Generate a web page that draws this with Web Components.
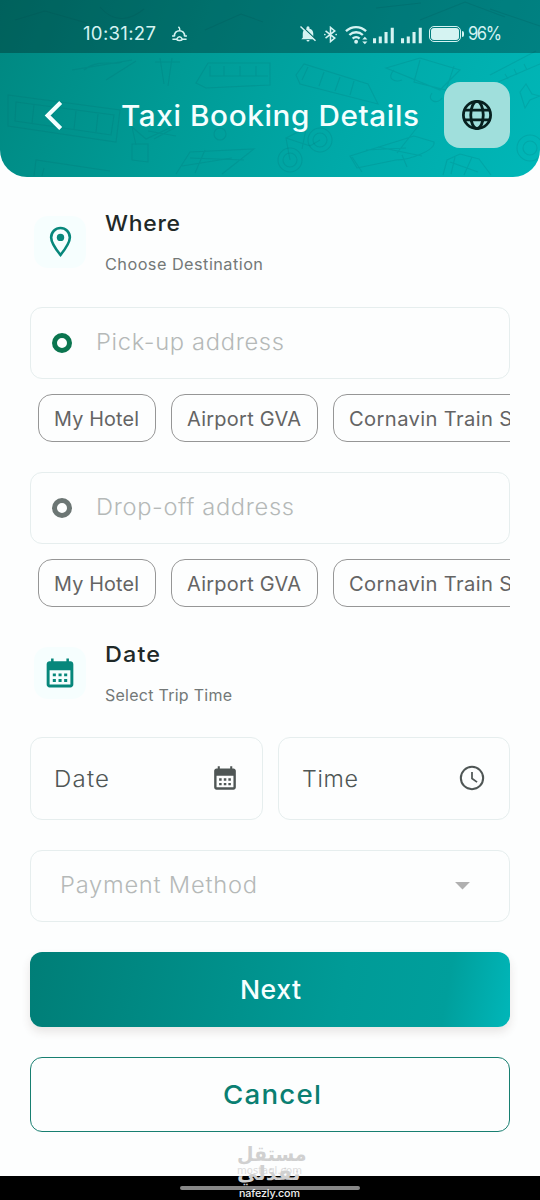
<!DOCTYPE html>
<html lang="en">
<head>
<meta charset="utf-8">
<title>Taxi Booking Details</title>
<style>
  body {
    margin: 0;
    width: 540px;
    height: 1200px;
    overflow: hidden;
    background: #fdfefe;
    font-family: Inter, "Liberation Sans", sans-serif;
  }
</style>
</head>
<body>
<booking-page></booking-page>

<script>
const ICONS = {
  bellOff: '<path fill="currentColor" d="M5 17V11C5 8 7 5.6 10 5V3.6a2 2 0 0 1 4 0V5c3 .6 5 3 5 6v6l2 2H3zM10 20h4a2 2 0 0 1-4 0z"/><path d="M3 1l20 19" stroke="#006a68" stroke-width="2"/><path d="M2 2l20 19" stroke="currentColor" stroke-width="2"/>',
  bluetooth: '<path fill="none" stroke="currentColor" stroke-width="2.2" d="M5 7l13 10-6 5V2l6 5L5 17"/><circle cx="4" cy="12" r="1.2" fill="currentColor"/><circle cx="20" cy="12" r="1.2" fill="currentColor"/>',
  wifi: '<g fill="none" stroke="currentColor" stroke-width="2.4"><path d="M1 8.500C7 2.800 16 2.800 22 8.500"/><path d="M4.600 12.500c4-3.800 10-3.800 14 0"/><path d="M8 16.300c2-2 5.200-2 7.200 0"/></g><circle cx="11.600" cy="19.600" r="2" fill="currentColor"/><path fill="currentColor" d="M18 17.300l2.700-3 2.700 3zM18 19.300l2.700 3 2.700-3z"/>',
  signal: '<path fill="currentColor" d="M0 16h3.200v5H0zM6 14h3.200v7H6zM12 9.500h3.200V21H12zM18.500 5h3.200v16h-3.200z"/>',
  food: '<g fill="none" stroke="currentColor" stroke-width="2.200"><path d="M5 16C3.500 5.500 20.500 5.500 19 16"/><path d="M1.500 15.500h3.500M19 15.500h3.500M2 20h6c2.500-4.500 5.500-4.500 8 0h6M8 20.500c1.500 2 6.500 2 8 0M12.500 7.500c.5-2-.5-3.500-2-5"/></g>',
  back: '<path fill="none" stroke="currentColor" stroke-width="3" d="M16.500 2.500L7 12l9.500 9.500"/>',
  globe: '<g fill="none" stroke="currentColor" stroke-width="2.100"><circle cx="12" cy="12" r="10.200"/><ellipse cx="12" cy="12" rx="4.700" ry="10.200"/><path d="M2.500 8.300h19M2.500 15.700h19"/></g>',
  pin: '<path fill="none" stroke="currentColor" stroke-width="1.900" d="M12 21.800C8.300 17.200 5.200 13 5.200 9a6.800 6.800 0 0 1 13.600 0c0 4-3.100 8.200-6.800 12.800z"/><circle cx="12" cy="9" r="2.700" fill="currentColor"/>',
  calendar: '<path fill="currentColor" fill-rule="evenodd" d="M5.300 1.200h1.900v2h9.600v-2h1.900v2h1.100c1.200 0 2.200 1 2.200 2.200v15.200c0 1.200-1 2.200-2.200 2.200H4.200C3 22.800 2 21.800 2 20.600V5.400c0-1.200 1-2.200 2.200-2.200h1.100zM4.200 10v10.600h15.600V10z"/><path fill="currentColor" d="M6.600 12.300h2.300v2.200H6.600zM10.900 12.300h2.300v2.200h-2.300zM15.100 12.300h2.300v2.200h-2.300zM6.600 16.500h2.300v2.200H6.600zM10.900 16.500h2.300v2.200h-2.300zM15.100 16.500h2.300v2.200h-2.300z"/>',
  clock: '<g fill="none" stroke="currentColor" stroke-width="1.900"><circle cx="12" cy="12" r="10.300"/><path stroke-width="1.600" d="M12 6.500v6l4.700 3.300"/></g>',
  caret: '<path fill="currentColor" d="M1.500 7h21L12 17.500z"/>'
};

class AppIcon extends HTMLElement {
  connectedCallback() {
    const shadow = this.attachShadow({mode: 'open'});
    const size = this.getAttribute('size') || 24;
    shadow.innerHTML = '<style>' +
      ':host { display: block; flex: none; }' +
      'svg { display: block; }' +
      '</style>' +
      `<svg width="${size}" height="${size}" viewBox="0 0 24 24">${ICONS[this.getAttribute('name')]}</svg>`;
  }
}

// One line of text that fills the given width: half by wider glyphs, half by tracking
class FitText extends HTMLElement {
  connectedCallback() {
    const shadow = this.attachShadow({mode: 'open'});
    shadow.innerHTML = '<style>' +
      ':host { display: block; flex: none; white-space: nowrap; }' +
      'span { display: inline-block; transform-origin: 0 50%; }' +
      '</style><span><slot></slot></span>';

    const target = parseFloat(this.getAttribute('width'));
    const span = shadow.querySelector('span');
    const natural = span.getBoundingClientRect().width;
    const scale = Math.sqrt(target / natural);
    const gap = (target / scale - natural) / (this.textContent.length - 1);
    span.style.letterSpacing = gap.toFixed(3) + 'px';
    span.style.transform = `scaleX(${scale.toFixed(4)})`;
    this.style.width = target + 'px';
  }
}

class StatusBar extends HTMLElement {
  constructor() {
    super();
    this.attachShadow({mode: 'open'}).innerHTML = `
      <style>
        :host {
          display: flex;
          align-items: center;
          box-sizing: border-box;
          height: 53px;
          padding: 15px 38px 0 83px;
          background: rgba(0, 0, 0, .28);
          color: #d5f3f2;
          font-size: 18px;
          line-height: 24px;
        }
        .food { margin: 0 auto 2px 15px; }
        .bt { margin-left: 5px; }
        .wifi { margin-left: 6px; }
        .sig { margin-left: 5px; }
        .sig + .sig { margin-left: 5px; }
        .battery {
          box-sizing: border-box;
          width: 32px;
          height: 16px;
          margin-left: 5px;
          padding: 1px;
          border: 1.500px solid;
          border-radius: 5px;
        }
        .battery i { display: block; height: 100%; border-radius: 3px; background: currentColor; }
        .cap { width: 2px; height: 6px; margin: 0 4px 0 1px; background: currentColor; border-radius: 0 2px 2px 0; }
      </style>
      <fit-text width="73">10:31:27</fit-text>
      <app-icon class="food" name="food" size="17"></app-icon>
      <app-icon name="bellOff" size="18"></app-icon>
      <app-icon class="bt" name="bluetooth" size="17"></app-icon>
      <app-icon class="wifi" name="wifi" size="23"></app-icon>
      <app-icon class="sig" name="signal" size="23"></app-icon>
      <app-icon class="sig" name="signal" size="23"></app-icon>
      <div class="battery"><i></i></div><div class="cap"></div>
      <fit-text width="34">96%</fit-text>`;
  }
}

class AppHeader extends HTMLElement {
  connectedCallback() {
    this.attachShadow({mode: 'open'}).innerHTML = `
      <style>
        :host {
          display: block;
          position: relative;
          height: 176.500px;
          overflow: hidden;
          border-radius: 0 0 27px 27px;
          background: linear-gradient(112deg, #008780 0%, #009b96 35%, #00a9a8 65%, #00b7b8 100%);
        }
        .art { position: absolute; inset: 0; }
        .content { position: relative; }
        .bar {
          display: flex;
          align-items: center;
          height: 124px;
          padding: 0 30px 0 38px;
          color: #f4ffff;
        }
        .title {
          margin-left: 50px;
          font-size: 28.500px;
          font-weight: 500;
        }
        .lang {
          display: grid;
          place-items: center;
          width: 66px;
          height: 66px;
          margin-left: auto;
          border-radius: 16px;
          background: #a0dfdc;
          color: #07201f;
        }
      </style>
      <svg class="art" width="540" height="177" fill="none" stroke="#005f62" stroke-opacity=".15" stroke-width="1.100">
        <path d="M8 95l112 15-4 32-108-16zM16 102l98 13-3 20-96-14zM34 105l-2 18M54 108l-2 18M76 111l-2 18M98 114l-2 18"/>
        <path d="M72 70l60-10M106 80l30-19M84 70c15-12 30-4 38-8M155 62h25M160 58l4 26M172 58l-4 28"/>
        <path d="M196 83l12-20h62v22l-64 3zM210 66v10h58M224 66v10M240 66v10M256 66v10"/>
        <path d="M132 160v-16h16v18zM136 145l-4-18 14 12 30-14M154 139l22-12M148 131l28 5"/><circle cx="220" cy="134" r="6"/>
        <path d="M34 176l2-16 74 11M42 176l2-8M176 174l14-22 64-3-32 25M182 166l50-8M190 158l54 2M205 150l-10 23"/>
        <circle cx="290" cy="160" r="12"/><circle cx="290" cy="160" r="7"/><circle cx="320" cy="140" r="12"/><circle cx="320" cy="140" r="7"/>
        <path d="M290 160l-4-22 24 8 10-6M286 138l20-10M302 149l5-25"/>
        <path d="M296 75l8-11 64 20 10 20-78-20zM308 67l-6 13M324 72l-5 14M340 77l-5 14M354 81l-4 14"/>
        <path d="M386 68l54 22 20-20-40-12zM420 60l-6 22 32 8 8-24M394 70c-8 8 0 13 8 10M432 93c-6 8 6 12 10 5"/>
        <path d="M350 156l64-20 20 6c2 8-24 18-38 18l-39 8zM352 157l10 15M378 147l44 9M397 153l22-28M402 155l5 12M366 150l40-2"/>
        <path d="M443 175l4-15 13-6 19 5 12 16M450 162l28 10M455 157l-4 17M472 157l-8 18"/>
        <path d="M490 75l46-24M498 82l42-18M505 74l3 5M514 69l3 6M524 64l3 6M520 92l6-8 6 10 8 2-10 4-5 8z"/><circle cx="530" cy="148" r="7"/><circle cx="530" cy="148" r="13"/>
        <path d="M15 20l30-9 42 12M100 7c15 18 32 12 44 2M205 30l36-16 22 8M376 8l45-5M420 20l45-18 40 15M490 9l50 17"/>
      </svg>
      <div class="content">
        <status-bar></status-bar>
        <div class="bar">
          <app-icon name="back" size="33"></app-icon>
          <fit-text class="title" width="298">${this.getAttribute('label')}</fit-text>
          <div class="lang"><app-icon name="globe" size="32"></app-icon></div>
        </div>
      </div>`;
  }
}

class SectionHead extends HTMLElement {
  constructor() {
    super();
    this.attachShadow({mode: 'open'}).innerHTML = `
      <style>
        :host { display: flex; height: 66px; padding-left: 4px; align-items: center; }
        .tile {
          display: grid;
          place-items: center;
          width: 52px;
          height: 52px;
          margin-right: 19px;
          border-radius: 14px;
          background: #f6fefe;
          color: #07877b;
        }
        .text { display: flex; flex-direction: column; gap: 17px; }
        .name { font-size: 22px; font-weight: 500; line-height: 30px; color: #1f2928; }
        .hint { font-size: 15.500px; line-height: 20px; color: #737877; }
      </style>
      <div class="tile"><slot name="icon"></slot></div>
      <div class="text">
        <div class="name"><slot></slot></div>
        <div class="hint"><slot name="hint"></slot></div>
      </div>`;
  }
}

class FormField extends HTMLElement {
  constructor() {
    super();
    this.attachShadow({mode: 'open'}).innerHTML = `
      <style>
        :host {
          display: flex;
          align-items: center;
          box-sizing: border-box;
          height: 72px;
          padding: 0 22px;
          border: 1.500px solid #e6eeee;
          border-radius: 12px;
          background: #fdfefe;
          font-size: 22.500px;
          font-weight: 300;
          color: #b5b9b8;
        }
        ::slotted(app-icon) { margin-left: auto; }
      </style>
      <slot></slot>`;
  }
}

class RadioDot extends HTMLElement {
  constructor() {
    super();
    this.attachShadow({mode: 'open'}).innerHTML =
      '<style>:host { display: block; box-sizing: border-box; flex: none; width: 20px; height: 20px; margin: 0 24px 0 -1px; border: 5px solid; border-radius: 50%; }</style>';
  }
}

class ChipRow extends HTMLElement {
  constructor() {
    super();
    this.attachShadow({mode: 'open'}).innerHTML = `
      <style>
        :host { display: flex; gap: 15px; padding-left: 7.500px; overflow: hidden; }
        div {
          box-sizing: border-box;
          flex: none;
          height: 48px;
          padding: 0 15.500px;
          border: 1.300px solid #969696;
          border-radius: 14px;
          font-size: 19.500px;
          line-height: 48px;
          color: #646464;
        }
      </style>
      <div><fit-text width="85">My Hotel</fit-text></div>
      <div><fit-text width="114">Airport GVA</fit-text></div>
      <div><fit-text width="219">Cornavin Train Station</fit-text></div>`;
  }
}

class AppButton extends HTMLElement {
  constructor() {
    super();
    this.attachShadow({mode: 'open'}).innerHTML = `
      <style>
        :host { display: block; }
        button {
          display: flex;
          align-items: center;
          justify-content: center;
          box-sizing: border-box;
          width: 100%;
          height: 75px;
          border: 1.500px solid #187f71;
          border-radius: 12px;
          background: #fdfefe;
          color: #0a7f72;
          font: 500 26px Inter, "Liberation Sans", sans-serif;
        }
        :host([primary]) button {
          border: 0;
          background: linear-gradient(100deg, #007e77 0%, #009b97 65%, #009f9c 86%, #00b5b7 99%);
          box-shadow: 0 5px 10px rgba(70, 50, 40, .12);
          color: #f6ffff;
        }
      </style>
      <button><slot></slot></button>`;
  }
}

class SiteMark extends HTMLElement {
  constructor() {
    super();
    this.attachShadow({mode: 'open'}).innerHTML = `
      <style>
        :host {
          position: absolute;
          left: 230px;
          bottom: 0;
          width: 80px;
          height: 58px;
          color: #d0d0d0;
          font-family: "DejaVu Sans", sans-serif;
        }
        div { position: absolute; left: 7px; white-space: nowrap; }
        .ar { top: -2px; font-size: 20px; font-weight: 700; line-height: 28px; }
        .dom { top: 23px; font-size: 10px; line-height: 12px; color: #dcdcdc; }
        .ar2 { top: 17px; font-size: 20px; font-weight: 700; line-height: 28px; }
        .site { left: 9px; bottom: 0; font: 500 11px/13px Inter, sans-serif; color: #eee; }
      </style>
      <div class="ar"><fit-text width="66">مستقل</fit-text></div>
      <div class="dom"><fit-text width="65">mostaql.com</fit-text></div>
      <div class="ar2"><fit-text width="66">نفذلي</fit-text></div>
      <div class="site"><fit-text width="61">nafezly.com</fit-text></div>`;
  }
}

class BookingPage extends HTMLElement {
  constructor() {
    super();
    this.attachShadow({mode: 'open'}).innerHTML = `
      <style>
        :host { display: flex; flex-direction: column; position: relative; height: 1200px; }
        main { flex: 1; padding: 32px 30px 0; }
        .field { margin-top: 32px; }
        chip-row { margin-top: 15px; }
        .drop { margin-top: 30px; }
        .when { margin-top: 33px; }
        .field fit-text, .drop fit-text, .pay fit-text { margin-bottom: 2px; }
        .pair { display: grid; grid-template-columns: 1fr 1fr; gap: 15px; margin-top: 31px; }
        .pair form-field { height: 83px; padding: 0 24px 0 23px; color: #4f5655; }
        .pay { margin-top: 30px; }
        .pay fit-text { margin-left: 7px; }
        .pay app-icon { margin-right: 16px; color: #b0b0b0; }
        .buttons { display: grid; gap: 30px; margin-top: 30px; }
        nav { display: grid; place-items: center; height: 24px; background: #000; }
        nav i { width: 180px; height: 4px; border-radius: 2px; background: #888; }
      </style>
      <app-header label="Taxi Booking Details"></app-header>
      <main>
        <section-head>
          <app-icon slot="icon" name="pin" size="33"></app-icon>
          <fit-text width="75">Where</fit-text>
          <fit-text slot="hint" width="158">Choose Destination</fit-text>
        </section-head>

        <form-field class="field">
          <radio-dot style="color: #0b754f"></radio-dot>
          <fit-text width="188">Pick-up address</fit-text>
        </form-field>
        <chip-row></chip-row>

        <form-field class="drop">
          <radio-dot style="color: #6c7674"></radio-dot>
          <fit-text width="198">Drop-off address</fit-text>
        </form-field>
        <chip-row></chip-row>

        <section-head class="when">
          <app-icon slot="icon" name="calendar" size="32"></app-icon>
          <fit-text width="55">Date</fit-text>
          <fit-text slot="hint" width="127">Select Trip Time</fit-text>
        </section-head>

        <div class="pair">
          <form-field>
            <fit-text width="55">Date</fit-text>
            <app-icon name="calendar" size="26"></app-icon>
          </form-field>
          <form-field>
            <fit-text width="56">Time</fit-text>
            <app-icon name="clock" size="26"></app-icon>
          </form-field>
        </div>

        <form-field class="pay">
          <fit-text width="197">Payment Method</fit-text>
          <app-icon name="caret" size="17"></app-icon>
        </form-field>

        <div class="buttons">
          <app-button primary><fit-text width="61">Next</fit-text></app-button>
          <app-button><fit-text width="98">Cancel</fit-text></app-button>
        </div>
      </main>
      <nav><i></i></nav>
      <site-mark></site-mark>`;
  }
}

customElements.define('app-icon', AppIcon);
customElements.define('fit-text', FitText);
customElements.define('status-bar', StatusBar);
customElements.define('app-header', AppHeader);
customElements.define('section-head', SectionHead);
customElements.define('form-field', FormField);
customElements.define('radio-dot', RadioDot);
customElements.define('chip-row', ChipRow);
customElements.define('app-button', AppButton);
customElements.define('site-mark', SiteMark);
customElements.define('booking-page', BookingPage);
</script>
</body>
</html>
